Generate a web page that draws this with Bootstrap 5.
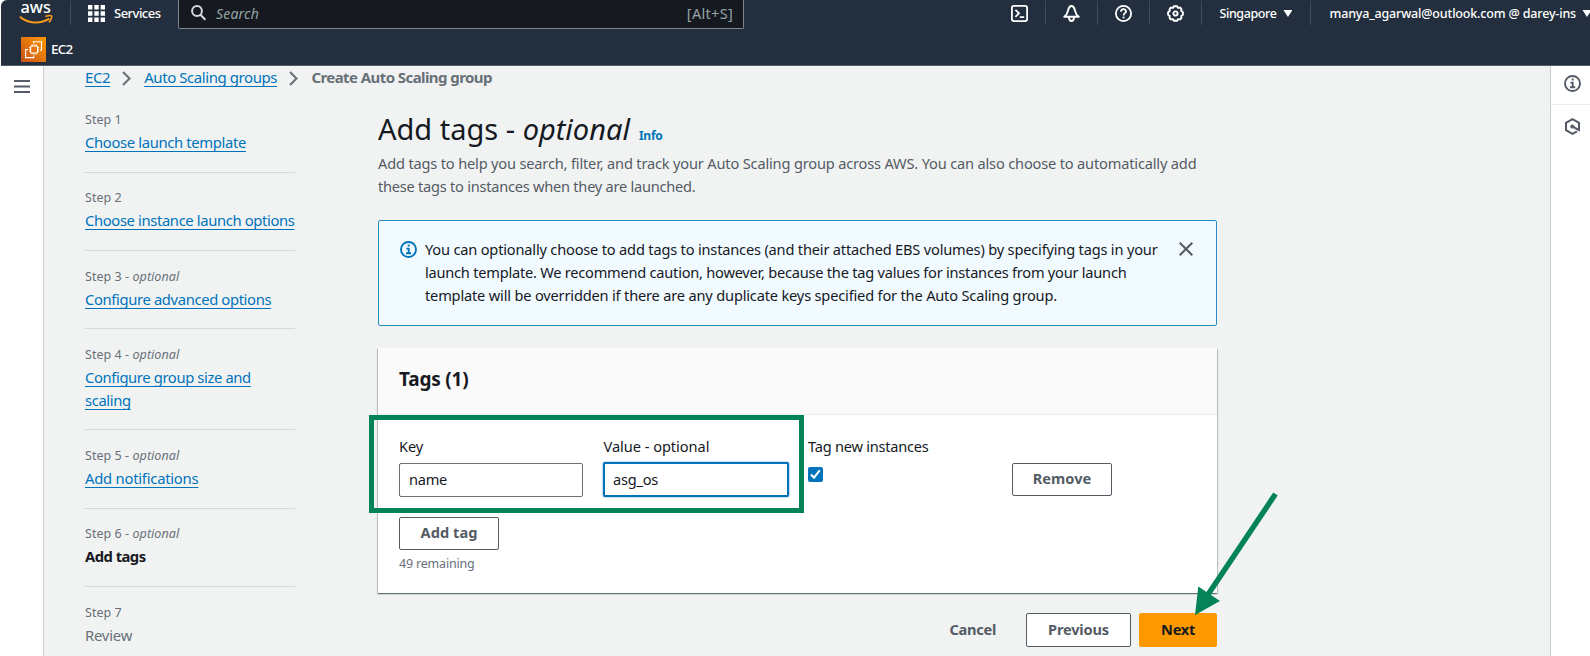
<!DOCTYPE html>
<html lang="en">
<head>
<meta charset="utf-8">
<title>Create Auto Scaling group | EC2</title>
<link href="https://cdn.jsdelivr.net/npm/bootstrap@5.3.0/dist/css/bootstrap.min.css" rel="stylesheet">
<style>
:root{--ink:#16191f;--muted-ink:#545b64;--soft-ink:#687078;--aws-blue:#0073bb;--mark-green:#038357}
html,body{height:656px;overflow:hidden}
body{font-family:"Noto Sans","Open Sans",sans-serif;font-size:14.6px;line-height:23px;color:var(--ink);background:#fff;margin:0}
svg{display:block;flex:none}
.top-head{margin-left:1px;height:66px;background:#232f3e;border-bottom:1px solid #545b64;border-top-left-radius:6px;color:#fff;font-weight:500;font-size:12.5px}
.top-row{height:29px}
.top-row>*{flex-shrink:0}
.sep{width:1px;height:24px;background:#414d5c;margin-top:1px;flex:none}
.top-row>.mid{height:27px}
.find{width:566px;height:29px;background:#161a20;border:1px solid #7b8788;border-top:0;border-radius:0 0 2px 2px;color:#95a5a6;font-weight:400;padding:0 10.5px 2px 12px}
.icon-cell{width:51px;height:27px;display:flex;align-items:center;justify-content:center}
.caret-dn{width:9px;height:7px;background:#fff;clip-path:polygon(0 0,100% 0,50% 100%)}
.shell{height:590px;margin-left:1px}
.rail-left{width:43px;border-right:1px solid #ccd1d1;padding:14px 0 0 13px}
.rail-right{width:40px;border-left:1px solid #ccd1d1}
.rail-right div{height:39px;padding:9px 0 0 13px;border-bottom:1px solid #eaeded}
.rail-right div+div{border:0;padding-top:13px}
.stage{background:#f1f3f3;padding-left:41px}
.crumbs{height:23px;font-size:15px;color:var(--soft-ink)}
.lk{color:var(--aws-blue);text-decoration:underline;text-decoration-thickness:1px;text-underline-offset:3px;text-decoration-skip-ink:none;font-size:14.8px;letter-spacing:-.345px}
.crumbs .lk{font-size:15px}
.steps{width:209.5px;margin-top:19px}
.steps li{border-bottom:1px solid #d5dbdb;padding-bottom:17.6px;margin-bottom:13.7px;color:var(--soft-ink)}
.steps li:last-child{border:0}
.steps small{display:block;font-size:12.5px;height:23px;letter-spacing:.05px}
.pane{width:839px;margin-left:83.5px;margin-top:19px}
.pane h1{font-size:29px;line-height:36px;font-weight:400;margin:2.5px 0 0;letter-spacing:0}
.info-lk{font-size:12px;font-weight:700;color:var(--aws-blue);letter-spacing:-.28px;margin-left:1.5px}
.intro{color:var(--muted-ink);margin:-2px 0 0}
.note{height:106.5px;margin-top:22px;border:1px solid #2b8bc7;border-radius:2px;background:#f1faff;padding:17.2px 21px 0 20.5px}
.note-text{padding-left:8.5px;flex:1;line-height:22.9px}
.tagbox{height:245.5px;margin-top:21.5px;background:#fff;border:0;border-radius:0;box-shadow:0 1px 1px 0 rgba(0,28,36,.4),1px 1px 1px 0 rgba(0,28,36,.18),-1px 1px 1px 0 rgba(0,28,36,.18)}
.tagbox header{height:67px;background:#fafafa;border-bottom:1px solid #eaeded;padding:20.3px 21px 0;font-size:19px;font-weight:700;letter-spacing:-.2px}
.tagbox section{padding:20.3px 21px 0;position:relative}
.fld{height:34px;border:1px solid #687078;border-radius:2px;padding:4px 9px;font-size:14.6px;line-height:22px;color:var(--ink);letter-spacing:-.25px;background:#fff}
.fld.on{border:2px solid var(--aws-blue);height:35.5px;margin:-1px -1px 0;padding:4px 8.5px;box-shadow:0 0 0 .5px #8fc3e3}
.abtn{height:33.5px;border:1px solid #545b64;border-radius:2px;background:#fff;color:var(--muted-ink);font-size:14.6px;line-height:21px;font-weight:700;padding:4px 0 6px;display:block}
.frame{position:absolute;left:-9.5px;top:.8px;width:435.5px;height:97.5px;border:5px solid var(--mark-green);pointer-events:none}
.tick{width:15px;height:15px;background:var(--aws-blue);border-radius:2px;margin-top:9px}
.pointer{position:absolute;left:1190px;top:484.5px}
</style>
</head>
<body>
<div class="top-head overflow-hidden">
  <div class="top-row d-flex align-items-start">
    <svg width="34" height="27" style="margin-left:18px" viewBox="0 0 34 27"><text x="1.5" y="13.3" font-family="Noto Sans,sans-serif" font-weight="500" font-size="15.6" textLength="30.5" lengthAdjust="spacingAndGlyphs" fill="#fff">aws</text><path d="M.8 16.8C9 23.8 21.5 24.4 30.3 18.7" fill="none" stroke="#f79a1c" stroke-width="2"/><path d="M26.3 16.4c2.6-.8 5.9-1 6.3-.3.4.8-.5 4.2-2.7 6.3" fill="none" stroke="#f79a1c" stroke-width="1.6"/></svg>
    <div class="sep" style="margin-left:17px"></div>
    <div class="mid d-flex align-items-center" style="margin-left:17px">
      <svg width="17" height="17" viewBox="0 0 17 17" fill="#fff"><path d="M0 0h4.4v4.4H0zM6.3 0h4.4v4.4H6.3zM12.6 0H17v4.4h-4.4zM0 6.3h4.4v4.4H0zM6.3 6.3h4.4v4.4H6.3zM12.6 6.3H17v4.4h-4.4zM0 12.6h4.4V17H0zM6.3 12.6h4.4V17H6.3zM12.6 12.6H17V17h-4.4z"/></svg>
      <span style="margin-left:9px;font-size:13px;letter-spacing:-.52px">Services</span>
    </div>
    <div class="find d-flex align-items-center" style="margin-left:18px">
      <svg width="15" height="16" viewBox="0 0 15 16" fill="none" stroke="#d5dbdb" stroke-width="2"><circle cx="6" cy="6" r="4.9"/><path d="M9.5 9.8l4.8 5"/></svg>
      <i style="margin-left:9.5px;font-size:14px;letter-spacing:.2px">Search</i>
      <span class="ms-auto" style="font-size:14.5px;letter-spacing:.3px">[Alt+S]</span>
    </div>
    <div class="d-flex" style="margin-left:250px">
      <div class="icon-cell"><svg width="17" height="17" viewBox="0 0 17 17" fill="none" stroke="#fff" stroke-width="1.8"><rect x=".9" y=".9" width="15.2" height="15.2" rx="2"/><path d="M4.4 4.8l3.6 3.5-3.6 3.5M8.8 12.1h4.4"/></svg></div><div class="sep"></div>
      <div class="icon-cell"><svg width="17" height="17" viewBox="0 0 17 17" fill="none" stroke="#fff" stroke-width="1.9" stroke-linejoin="round"><path d="M1.2 11.8C4.6 9.6 4.6 7 5.3 4.6 5.9 2.4 6.9 1 8.5 1s2.6 1.4 3.2 3.6c.7 2.4.7 5 4.1 7.2z"/><path d="M6 12.3c0 5 5 5 5 0"/></svg></div><div class="sep"></div>
      <div class="icon-cell"><svg width="17" height="17" viewBox="0 0 17 17" fill="none" stroke="#fff" stroke-width="1.8"><circle cx="8.5" cy="8.5" r="7.6"/><path d="M6 6.7C6 3.3 11 3.5 11 6.4 11 8.2 8.6 8.1 8.6 10.4"/><path d="M8.6 11.6v1.8"/></svg></div><div class="sep"></div>
      <div class="icon-cell"><svg width="17" height="17" viewBox="0 0 17 17" fill="none" stroke="#fff" stroke-width="1.9" stroke-linejoin="round"><path d="M6.9 1.2h3.2l.8 1.5 2.4-.1 1.2 1.9-.3 1.5 1.7 1.2v2.6l-1.7 1.2.3 1.6-1.2 1.8-2.4-.1-.8 1.5H6.9l-.8-1.5-2.4.1-1.2-1.8.3-1.6-1.7-1.2V7.2L2.8 6l-.3-1.5 1.2-1.9 2.4.1z"/><circle cx="8.5" cy="8.5" r="2.1"/></svg></div><div class="sep"></div>
    </div>
    <div class="mid d-flex align-items-center" style="margin-left:17px"><span style="letter-spacing:-.4px">Singapore</span><span class="caret-dn" style="margin-left:7px"></span></div>
    <div class="sep" style="margin-left:18px"></div>
    <div class="mid d-flex align-items-center text-nowrap" style="margin-left:18px"><span style="letter-spacing:-.165px">manya_agarwal@outlook.com @ darey-ins</span><span class="caret-dn" style="margin-left:6.5px"></span></div>
  </div>
  <div class="d-flex align-items-center" style="margin:8px 0 0 20px">
    <svg width="25" height="25" viewBox="0 0 25 25"><defs><linearGradient id="ec" x1="0" y1="1" x2="1" y2="0"><stop stop-color="#c8511b"/><stop offset="1" stop-color="#f90"/></linearGradient></defs><path fill="url(#ec)" d="M0 0h25v25H0z"/><g fill="none" stroke="#fff" stroke-width="1.1"><rect x="9.6" y="9" width="7" height="7" rx="1"/><path d="M11 7.6V9m2.1-1.4V9m2.1-1.4V9M11 16v1.4m2.1-1.4v1.4m2.1-1.4v1.4M8.2 10.5h1.4m-1.4 2h1.4m-1.4 2h1.4m7-4H18m-1.4 2H18m-1.4 2H18M12.5 6.5V4.8h8v8.4h-1.5M7 12.6H4.6v8h8.2v-2.2"/></g></svg>
    <span style="margin-left:5px;font-size:13.4px;letter-spacing:-.7px">EC2</span>
  </div>
</div>

<div class="shell d-flex">
  <nav class="rail-left flex-shrink-0"><svg width="16" height="13" viewBox="0 0 16 13" stroke="#545b64" stroke-width="2"><path d="M0 1h16M0 6.5h16M0 12h16"/></svg></nav>
  <main class="stage flex-grow-1">
    <div class="crumbs d-flex align-items-center">
      <a class="lk" href="#" style="letter-spacing:-.45px">EC2</a>
      <svg style="margin:2px 13.3px 0 11.8px" width="9" height="15" viewBox="0 0 9 15" fill="none" stroke="#687078" stroke-width="2.1"><path d="M1 1l6.5 6.5L1 14"/></svg>
      <a class="lk" href="#" style="letter-spacing:-.43px">Auto Scaling groups</a>
      <svg style="margin:2px 13.5px 0 11.8px" width="9" height="15" viewBox="0 0 9 15" fill="none" stroke="#687078" stroke-width="2.1"><path d="M1 1l6.5 6.5L1 14"/></svg>
      <b style="letter-spacing:-.573px">Create Auto Scaling group</b>
    </div>
    <div class="d-flex">
      <ul class="steps list-unstyled mb-0 flex-shrink-0">
        <li><small>Step 1</small><a class="lk" href="#">Choose launch template</a></li>
        <li><small>Step 2</small><a class="lk text-nowrap" href="#" style="letter-spacing:-.375px">Choose instance launch options</a></li>
        <li><small>Step 3 - <i>optional</i></small><a class="lk" href="#" style="letter-spacing:-.37px">Configure advanced options</a></li>
        <li><small>Step 4 - <i>optional</i></small><a class="lk" href="#" style="letter-spacing:-.39px">Configure group size and<br>scaling</a></li>
        <li><small>Step 5 - <i>optional</i></small><a class="lk" href="#" style="letter-spacing:-.24px">Add notifications</a></li>
        <li><small>Step 6 - <i>optional</i></small><b style="color:var(--ink);font-size:14.8px;letter-spacing:-.54px">Add tags</b></li>
        <li><small>Step 7</small><span style="font-size:14.8px;letter-spacing:-.2px">Review</span></li>
      </ul>
      <div class="pane">
        <h1>Add tags - <i>optional</i> <a class="info-lk text-decoration-none" href="#">Info</a></h1>
        <p class="intro text-nowrap"><span style="letter-spacing:-.171px">Add tags to help you search, filter, and track your Auto Scaling group across AWS. You can also choose to automatically add</span><br><span style="letter-spacing:-.245px">these tags to instances when they are launched.</span></p>
        <div class="note d-flex align-items-start text-nowrap">
          <svg style="margin-top:3.5px" width="17" height="17" viewBox="0 0 17 17" fill="none" stroke="#0073bb" stroke-width="1.9"><circle cx="8.5" cy="8.5" r="7.5"/><path d="M8.7 3.6v2M6.4 7.6h2.3v4.6M6 12.3h5.2"/></svg>
          <div class="note-text"><span style="letter-spacing:-.183px">You can optionally choose to add tags to instances (and their attached EBS volumes) by specifying tags in your</span><br><span style="letter-spacing:-.231px">launch template. We recommend caution, however, because the tag values for instances from your launch</span><br><span style="letter-spacing:-.176px">template will be overridden if there are any duplicate keys specified for the Auto Scaling group.</span></div>
          <svg style="margin:4.5px 2.5px 0 0" width="14" height="14" viewBox="0 0 14 14" stroke="#545b64" stroke-width="2"><path d="M.7.7l12.6 12.6M13.3.7L.7 13.3"/></svg>
        </div>
        <div class="tagbox card">
          <header>Tags (1)</header>
          <section>
            <div class="d-flex">
              <div style="width:184px"><div style="height:28px;letter-spacing:-.14px">Key</div><div class="fld">name</div></div>
              <div style="width:184px;margin-left:20.5px"><div style="height:28px;letter-spacing:-.04px">Value - optional</div><div class="fld on">asg_os</div></div>
              <div style="width:184px;margin-left:20.5px"><div style="height:23px;letter-spacing:-.24px">Tag new instances</div><div class="tick"><svg width="15" height="15" viewBox="0 0 15 15" fill="none" stroke="#fff" stroke-width="2.1"><path d="M3 7.6l3 3 5.7-7.3"/></svg></div></div>
              <button class="abtn" style="width:100px;margin:28px 0 0 20px;letter-spacing:.05px">Remove</button>
            </div>
            <button class="abtn" style="width:100px;margin-top:19.7px;letter-spacing:.05px">Add tag</button>
            <div style="font-size:12.5px;color:var(--soft-ink);letter-spacing:-.19px;padding-top:1.2px">49 remaining</div>
            <div class="frame"></div>
          </section>
        </div>
        <div class="d-flex align-items-center justify-content-end" style="margin-top:20.3px">
          <b style="color:var(--muted-ink);letter-spacing:-.28px;margin-right:30px;margin-top:-2px">Cancel</b>
          <button class="abtn" style="width:105px;letter-spacing:-.17px">Previous</button>
          <button class="abtn" style="width:78px;margin-left:8px;background:#f90;border-color:#f90;color:var(--ink);letter-spacing:-.3px">Next</button>
        </div>
      </div>
    </div>
  </main>
  <aside class="rail-right flex-shrink-0">
    <div><svg width="17" height="17" viewBox="0 0 17 17" fill="none" stroke="#545b64" stroke-width="1.9"><circle cx="8.5" cy="8.5" r="7.5"/><path d="M8.7 3.6v2M6.4 7.6h2.3v4.6M6 12.3h5.2"/></svg></div>
    <div><svg width="17" height="17" viewBox="0 0 17 17" fill="none" stroke="#545b64" stroke-width="2"><path d="M15 8V4.8L8.5 1.2 2 4.8v7.4l6.5 3.6 4.5-2.5M15 8v4L9 8.8"/><circle cx="8.3" cy="8.5" r="1.6" fill="#545b64" stroke-width="1"/></svg></div>
  </aside>
</div>
<svg class="pointer" width="95" height="135" viewBox="0 0 95 135"><path d="M85.5 9L17 111" stroke="#038357" stroke-width="5.4"/><path d="M5 130L8.3 101.5 30 116z" fill="#038357"/></svg>
</body>
</html>
